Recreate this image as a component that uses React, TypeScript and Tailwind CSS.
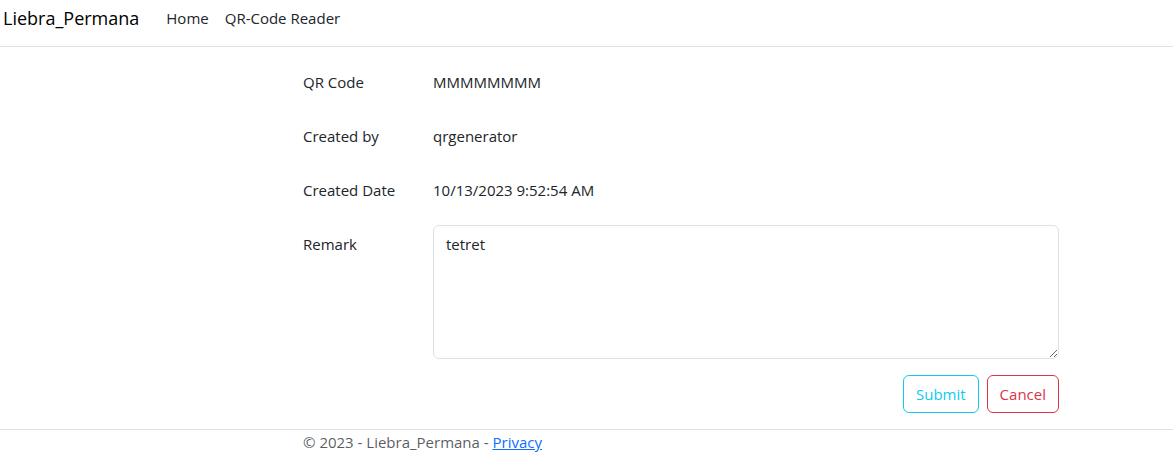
import React from "react";

const details = [
  { label: "QR Code", value: "MMMMMMMM" },
  { label: "Created by", value: "qrgenerator" },
  { label: "Created Date", value: "10/13/2023 9:52:54 AM" },
];

export default function App() {
  return (
    <div className="bg-white font-['Open_Sans','Noto_Sans',sans-serif] text-[15px] leading-6 text-[#212529]">
      <header className="border-b border-[#dee2e6]">
        <nav className="flex items-center gap-4 px-[3px] pt-[3px] pb-[13px]">
          <a href="#" className="mr-[11px] text-lg leading-[30px] text-black">Liebra_Permana</a>
          <a href="#">Home</a>
          <a href="#">QR-Code Reader</a>
        </nav>
      </header>
      <main className="mr-[114px] ml-[303px] pt-[23px] pb-4">
        <dl>
          {details.map((d) => (
            <div key={d.label} className="mb-[30px] flex">
              <dt className="w-[130px] shrink-0">{d.label}</dt>
              <dd>{d.value}</dd>
            </div>
          ))}
        </dl>
        <form>
          <div className="-mt-[7px] flex">
            <label htmlFor="remark" className="w-[130px] shrink-0 pt-[7px]">Remark</label>
            <textarea
              id="remark"
              defaultValue="tetret"
              className="block h-[134px] min-w-0 flex-1 resize-y rounded-md border border-[#dee2e6] px-3 py-[6px]"
            />
          </div>
          <div className="mt-4 flex justify-end gap-2">
            <button type="button" className="rounded-md border border-[#0dcaf0] px-3 py-[6px] text-[#0dcaf0]">Submit</button>
            <button type="button" className="rounded-md border border-[#dc3545] px-3 py-[6px] text-[#dc3545]">Cancel</button>
          </div>
        </form>
      </main>
      <footer className="border-t border-[#dee2e6] pl-[303px] text-[#212529]/75">
        © 2023 - Liebra_Permana -{" "}
        <a href="#" className="text-[#0d6efd] underline">Privacy</a>
      </footer>
    </div>
  );
}
